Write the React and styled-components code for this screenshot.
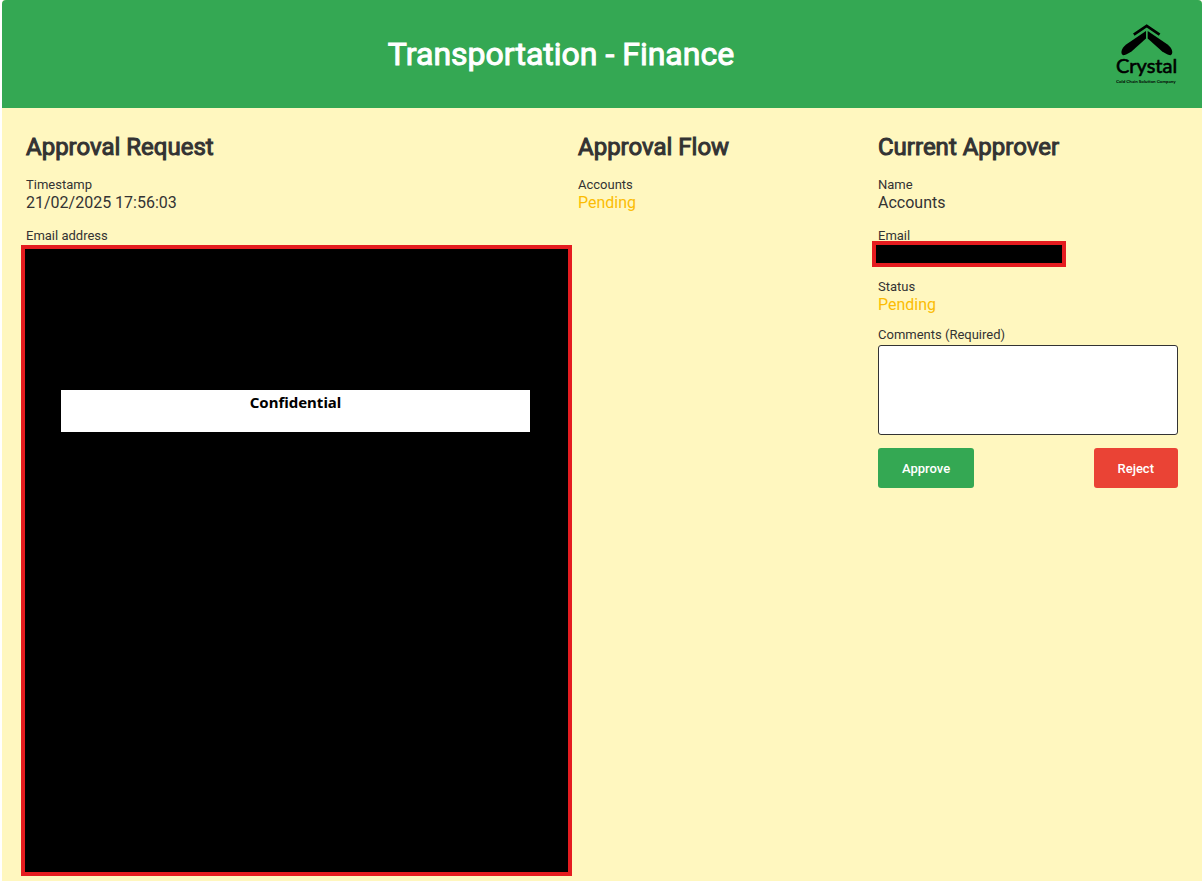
import React from "react";
import styled, { createGlobalStyle } from "styled-components";

const GlobalStyle = createGlobalStyle`
  *, *::before, *::after { box-sizing: border-box; }
  body {
    margin: 0;
    background: #ffffff;
    color: #333333;
    font-family: Roboto, "Liberation Sans", sans-serif;
    font-size: 16px;
  }
`;

const Page = styled.div`
  display: flex;
  flex-direction: column;
  min-height: 100vh;
  margin: 0 1px 0 2px;
  border-radius: 4px 4px 0 0;
  background: #fff7bf;
  overflow: hidden;
`;

const Header = styled.header`
  display: flex;
  align-items: center;
  gap: 20px;
  padding: 24px;
  background: #34a853;
`;

const Title = styled.h1`
  flex: 1;
  margin: 0;
  color: #ffffff;
  font-size: 32px;
  font-weight: 400;
  line-height: 40px;
  text-align: center;
  -webkit-text-stroke: 1px currentColor;
`;

const Logo = styled.svg`
  display: block;
  flex: none;
  width: 62px;
  height: 60px;
`;

const Columns = styled.main`
  display: grid;
  grid-template-columns: 46fr 25fr 25fr;
  padding: 24px 24px 5px;
`;

const Column = styled.section`
  display: flex;
  flex-direction: column;
  gap: 15px;
  min-width: 0;
`;

const Heading = styled.h2`
  margin: 0;
  font-size: 24px;
  font-weight: 400;
  line-height: 30px;
  -webkit-text-stroke: 1px currentColor;
`;

const Fields = styled.dl`
  display: flex;
  flex-direction: column;
  gap: 15px;
  margin: 0;
`;

const Label = styled.dt`
  font-size: 13px;
  line-height: 16px;
`;

const Value = styled.dd`
  margin: 0;
  color: ${(p) => (p.$pending ? "#fbbc04" : "inherit")};
  line-height: 20px;
`;

const Redacted = styled.dd`
  position: relative;
  border: 4px solid #e51c1f;
  background: #000000;
`;

const RedactedLine = styled(Redacted)`
  width: 194px;
  height: 26px;
  margin: -3px 0 -3px -6px;
`;

const RedactedPanel = styled(Redacted)`
  min-height: 631px;
  margin: 1px 6px 0 -5px;
  padding: 141px 38px 0 36px;
`;

const Notice = styled.p`
  min-height: 42px;
  margin: 0;
  padding-top: 2px;
  background: #ffffff;
  color: #000000;
  font-family: "Noto Sans", "Open Sans", sans-serif;
  font-size: 15px;
  font-weight: 700;
  line-height: 20px;
  text-align: center;
`;

const Form = styled.form`
  display: flex;
  flex-direction: column;
  margin-top: -3px;
`;

const FieldLabel = styled.label`
  font-size: 13px;
  line-height: 16px;
`;

const Comments = styled.textarea`
  display: block;
  width: 100%;
  height: 90px;
  margin: 2px 0 13px;
  padding: 8px;
  border: 1px solid #333333;
  border-radius: 3px;
  background: #ffffff;
  font: inherit;
  resize: none;
`;

const Actions = styled.div`
  display: flex;
  justify-content: space-between;
`;

const Button = styled.button`
  height: 40px;
  padding: 0 24px;
  border: 0;
  border-radius: 3px;
  background: ${(p) => (p.$danger ? "#ea4335" : "#34a853")};
  color: #ffffff;
  font-family: inherit;
  font-size: 13px;
  font-weight: 500;
  cursor: pointer;
`;

function CrystalLogo() {
  return (
    <Logo viewBox="0 0 62 60" role="img" aria-label="Crystal">
      <path d="M17.8 10.6 L30.7 1.8 L43.6 10.6" fill="none" stroke="#000" strokeWidth="2.7" />
      <path d="M30 7 V14.4 L15.5 27.4 Q10 31 7 31.2 Q5.4 30.8 5.4 28 Q6 23.5 10.5 20.3 Z" />
      <path d="M31.7 7 V14.4 L46.2 27.4 Q51.7 31 54.7 31.2 Q56.3 30.8 56.3 28 Q55.7 23.5 51.2 20.3 Z" />
      <text x="0" y="49" fontFamily="Lato, sans-serif" fontSize="20" stroke="#000" strokeWidth="0.6">Crystal</text>
      <text x="0" y="59" fontFamily="Lato, sans-serif" fontSize="4.5" fontWeight="700">Cold Chain Solution Company</text>
    </Logo>
  );
}

export default function App() {
  return (
    <>
      <GlobalStyle />
      <Page>
        <Header>
          <Title>Transportation - Finance</Title>
          <CrystalLogo />
        </Header>
        <Columns>
          <Column>
            <Heading>Approval Request</Heading>
            <Fields>
              <div>
                <Label>Timestamp</Label>
                <Value>21/02/2025 17:56:03</Value>
              </div>
              <div>
                <Label>Email address</Label>
                <RedactedPanel>
                  <Notice>Confidential</Notice>
                </RedactedPanel>
              </div>
            </Fields>
          </Column>
          <Column>
            <Heading>Approval Flow</Heading>
            <Fields>
              <div>
                <Label>Accounts</Label>
                <Value $pending>Pending</Value>
              </div>
            </Fields>
          </Column>
          <Column>
            <Heading>Current Approver</Heading>
            <Fields>
              <div>
                <Label>Name</Label>
                <Value>Accounts</Value>
              </div>
              <div>
                <Label>Email</Label>
                <RedactedLine />
              </div>
              <div>
                <Label>Status</Label>
                <Value $pending>Pending</Value>
              </div>
            </Fields>
            <Form onSubmit={(e) => e.preventDefault()}>
              <FieldLabel htmlFor="comments">Comments (Required)</FieldLabel>
              <Comments id="comments" required />
              <Actions>
                <Button type="submit">Approve</Button>
                <Button type="submit" $danger>Reject</Button>
              </Actions>
            </Form>
          </Column>
        </Columns>
      </Page>
    </>
  );
}
